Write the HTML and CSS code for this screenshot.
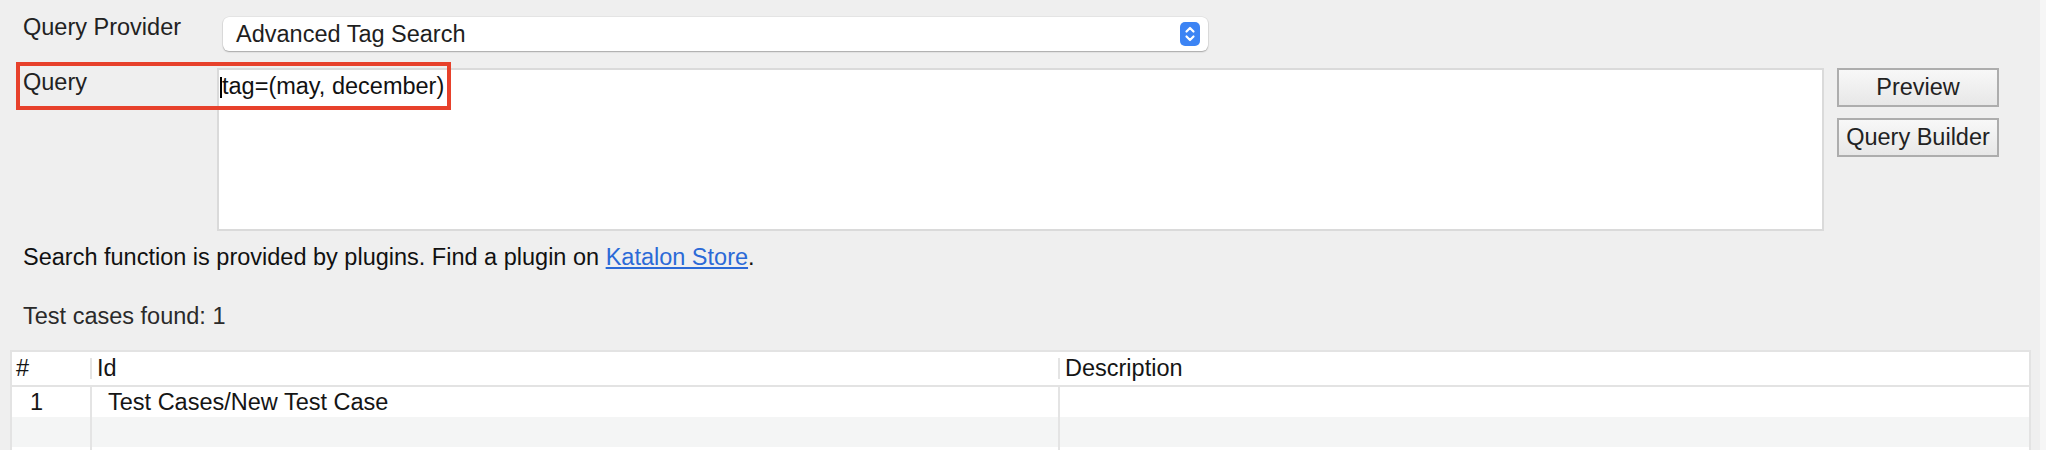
FILE: index.html
```html
<!DOCTYPE html>
<html>
<head>
<meta charset="utf-8">
<link rel="stylesheet" href="styles.css">
</head>
<body>
<div class="window">
  <div class="provider-row">
    <div class="label">Query Provider</div>
    <div class="select">
      <span class="select-text">Advanced Tag Search</span>
      <svg class="stepper" width="20" height="24" viewBox="0 0 20 24">
        <rect x="0" y="0" width="20" height="24" rx="5" fill="#3c84f4"/>
        <polyline points="6.5,9.5 10,6 13.5,9.5" fill="none" stroke="#fff" stroke-width="2.2" stroke-linecap="round" stroke-linejoin="round"/>
        <polyline points="6.5,14.5 10,18 13.5,14.5" fill="none" stroke="#fff" stroke-width="2.2" stroke-linecap="round" stroke-linejoin="round"/>
      </svg>
    </div>
  </div>

  <div class="query-row">
    <div class="label query-label">Query</div>
    <div class="textarea"><span class="caret"></span>tag=(may, december)</div>
    <div class="buttons">
      <div class="btn">Preview</div>
      <div class="btn">Query Builder</div>
    </div>
    <div class="highlight"></div>
  </div>

  <div class="info">Search function is provided by plugins. Find a plugin on <a class="link" href="#">Katalon Store</a>.</div>
  <div class="found">Test cases found: 1</div>

  <div class="table">
    <div class="trow thead">
      <div class="cell c1">#</div>
      <div class="cell c2 hsep">Id</div>
      <div class="cell c3 hsep">Description</div>
    </div>
    <div class="trow body-row">
      <div class="cell c1 num">1</div>
      <div class="cell c2 vsep id">Test Cases/New Test Case</div>
      <div class="cell c3 vsep"></div>
    </div>
    <div class="trow body-row alt">
      <div class="cell c1"></div>
      <div class="cell c2 vsep"></div>
      <div class="cell c3 vsep"></div>
    </div>
    <div class="trow body-row">
      <div class="cell c1"></div>
      <div class="cell c2 vsep"></div>
      <div class="cell c3 vsep"></div>
    </div>
  </div>
</div>
</body>
</html>
```

FILE: styles.css
```css
html, body {
  margin: 0;
  padding: 0;
}
body {
  background: #f6f6f6;
  font-family: "Liberation Sans", Arial, sans-serif;
  font-size: 23.5px;
  color: #1c1c1c;
  width: 2046px;
  height: 450px;
  overflow: hidden;
}
.window {
  width: 2040px;
  height: 450px;
  overflow: hidden;
  background: #efefef;
  padding-top: 14px;
  box-sizing: border-box;
}
.provider-row {
  display: flex;
  align-items: flex-start;
}
.label {
  width: 194px;
  padding-left: 23px;
  line-height: 27px;
  color: #222;
  flex: none;
}
.select {
  margin-top: 3px;
  margin-left: 6px;
  width: 985px;
  height: 34px;
  box-sizing: border-box;
  background: #fff;
  border-radius: 6px;
  box-shadow: 0 1px 1.5px rgba(0,0,0,0.28), 0 0 0 0.5px rgba(0,0,0,0.08);
  display: flex;
  align-items: center;
  justify-content: space-between;
  padding: 0 8px 0 13px;
}
.select-text {
  color: #1e1e1e;
}
.stepper {
  display: block;
  flex: none;
}
.query-row {
  position: relative;
  display: flex;
  align-items: flex-start;
  margin-top: 17px;
}
.query-label {
  margin-top: 1px;
}
.textarea {
  width: 1607px;
  height: 163px;
  box-sizing: border-box;
  background: #fff;
  border: 2px solid #dadada;
  padding: 3px 0 0 1px;
  line-height: 27px;
  color: #111;
  flex: none;
  display: flex;
  align-items: flex-start;
}
.caret {
  display: inline-block;
  width: 2px;
  height: 21px;
  background: #000;
  margin-top: 4px;
  margin-right: 0;
  flex: none;
}
.buttons {
  margin-left: 13px;
  display: flex;
  flex-direction: column;
  gap: 11px;
}
.btn {
  width: 162px;
  height: 39px;
  box-sizing: border-box;
  border: 2px solid #adadad;
  background: linear-gradient(#f8f8f8, #e7e7e7);
  display: flex;
  align-items: center;
  justify-content: center;
  color: #222;
}
.highlight {
  position: absolute;
  left: 16px;
  top: -6px;
  width: 435px;
  height: 48px;
  box-sizing: border-box;
  border: 4px solid #e7412b;
  pointer-events: none;
}
.info {
  padding-left: 23px;
  line-height: 27px;
  margin-top: 13px;
  color: #111;
}
.link {
  color: #2b6ad7;
  text-decoration: underline;
}
.found {
  padding-left: 23px;
  line-height: 27px;
  margin-top: 32px;
  color: #2a2a2a;
}
.table {
  margin-top: 20px;
  margin-left: 10px;
  width: 2021px;
  box-sizing: border-box;
  border: 2px solid #e3e3e3;
  border-bottom: none;
  background: #fff;
}
.trow {
  display: grid;
  grid-template-columns: 78px 968px 1fr;
}
.thead {
  height: 35px;
  border-bottom: 2px solid #e3e3e3;
  box-sizing: border-box;
  align-items: center;
}
.body-row {
  height: 30px;
}
.body-row.alt {
  background: #f4f5f5;
}
.cell {
  line-height: 30px;
  white-space: nowrap;
  position: relative;
  color: #151515;
}
.thead .cell {
  line-height: 33px;
}
.c1 {
  padding-left: 4px;
}
.c2, .c3 {
  padding-left: 7px;
}
.hsep::before {
  content: "";
  position: absolute;
  left: 0;
  top: 6px;
  height: 21px;
  width: 2px;
  background: #e4e4e4;
}
.vsep {
  border-left: 2px solid #e4e4e4;
  padding-left: 5px;
}
.num {
  padding-left: 18px;
}
.id {
  padding-left: 16px;
}
```
